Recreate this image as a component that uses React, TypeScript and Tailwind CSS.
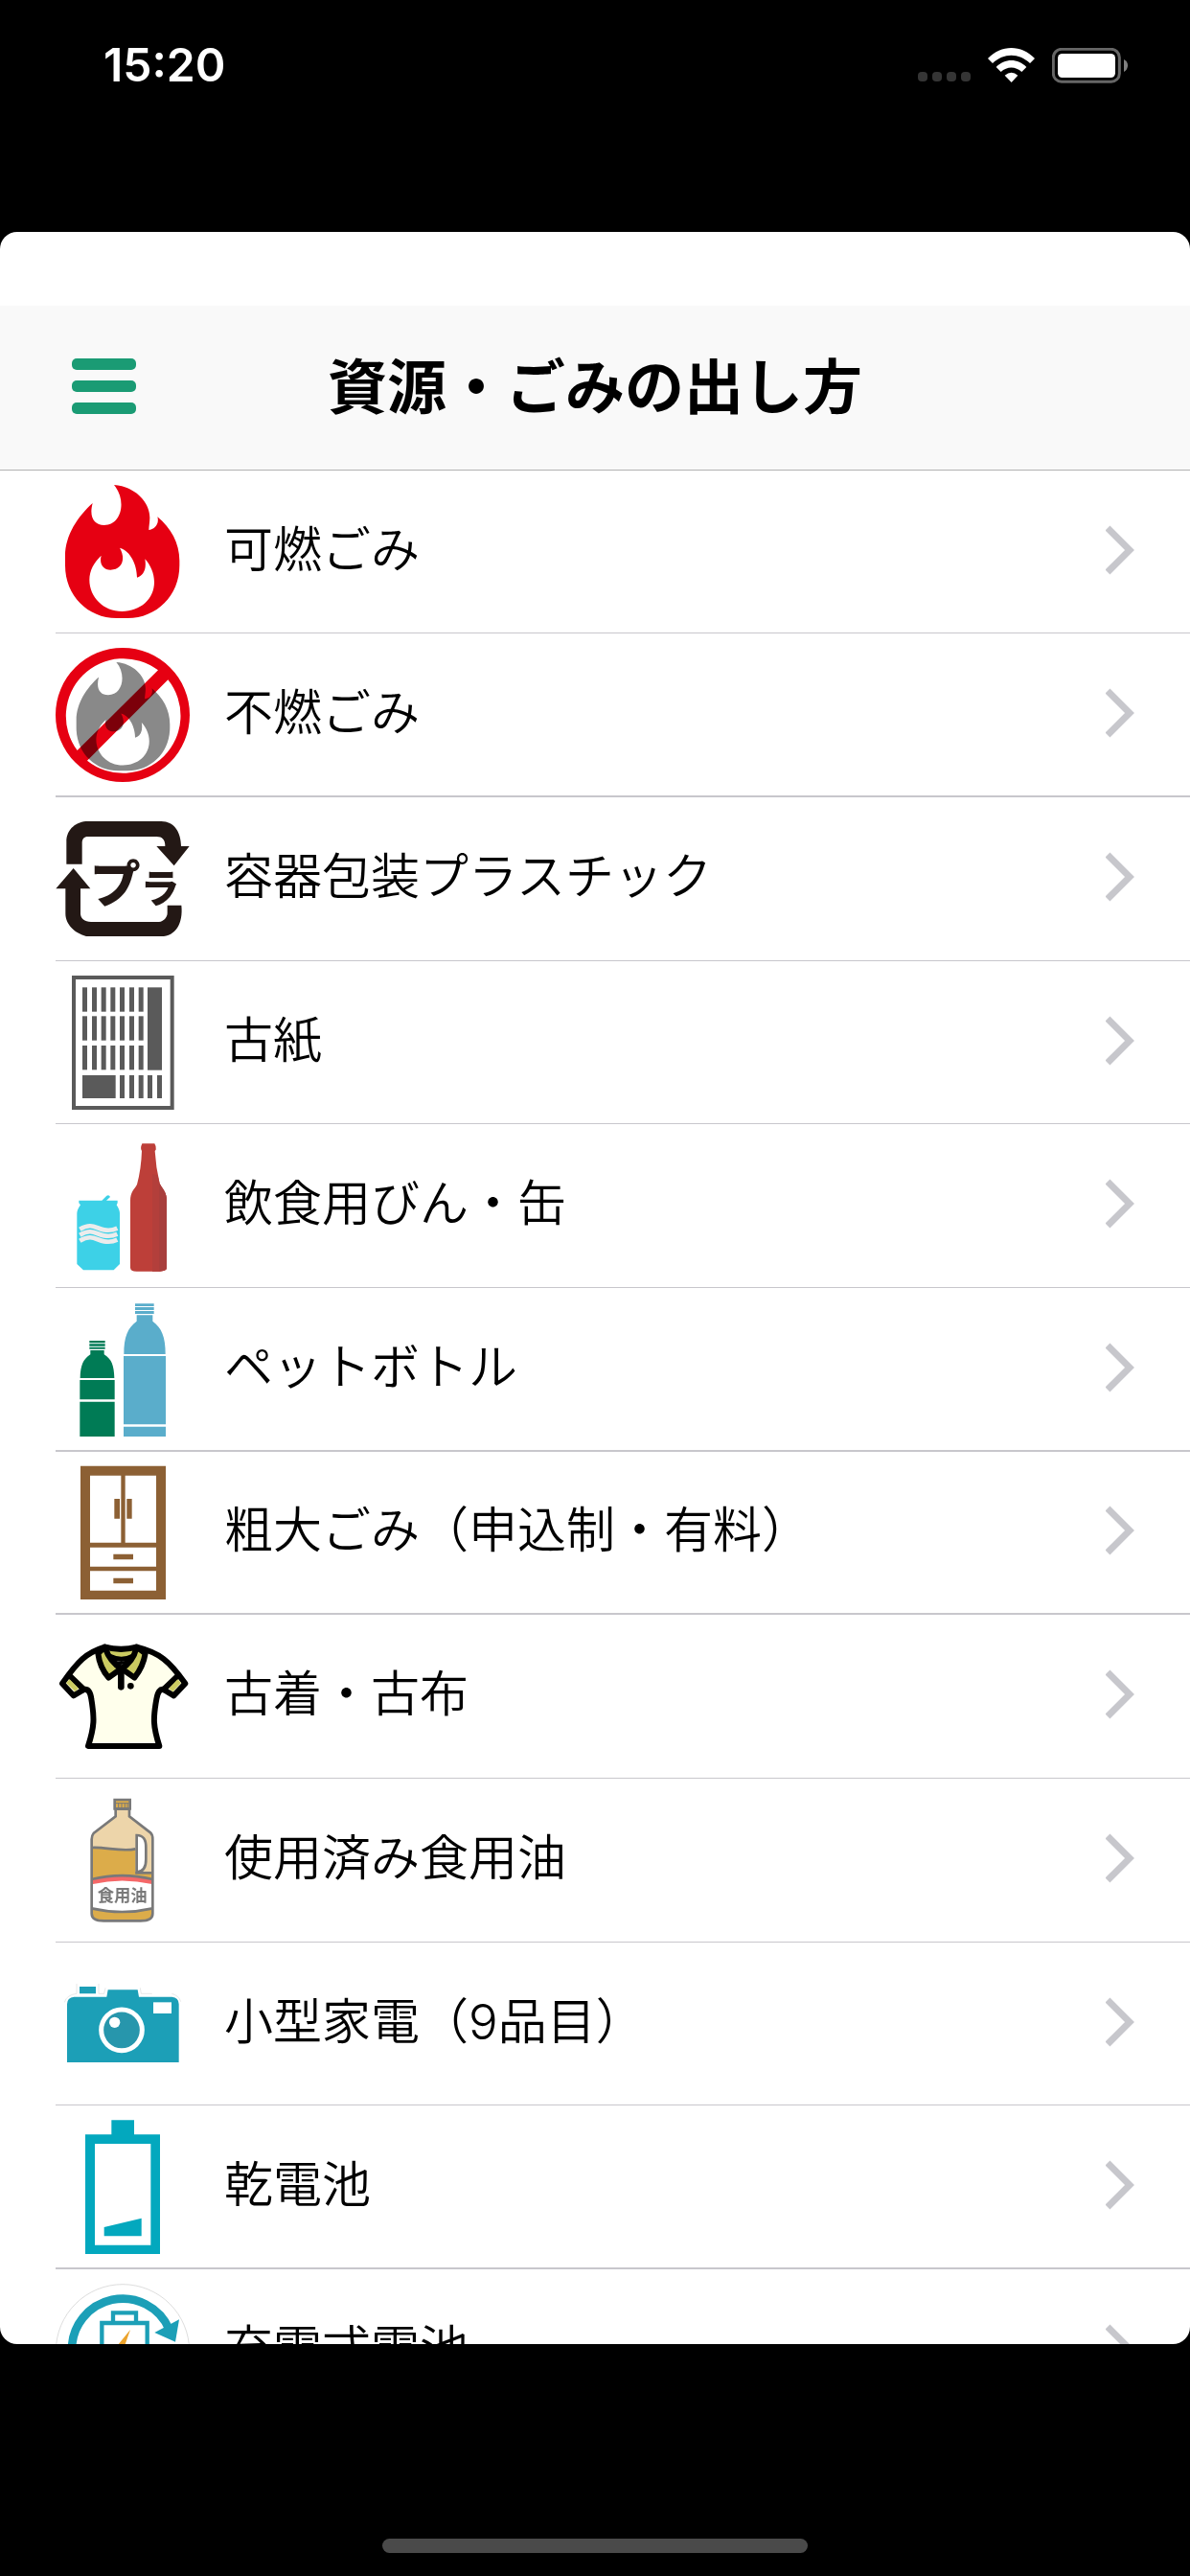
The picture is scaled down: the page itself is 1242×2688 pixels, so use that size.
import type { ReactNode } from 'react'

type Category = {
  label: string
  icon: ReactNode
  thick?: boolean
}

const FLAME_OUTER =
  'M237 48C300 52 349 100 349 150C349 165 346 178 346 189C362 188 380 172 373 148C415 183 442 230 442 285V300C442 395 370 465 280 465H245C155 465 84 395 84 300V270C84 205 125 145 170 105C158 150 175 174 206 174C262 174 277 95 237 48Z'
const FLAME_INNER =
  'M255 245C290 255 309 300 309 338C327 333 340 315 334 280C352 300 363 325 363 352C363 405 320 444 262 444C205 444 160 400 160 345C160 315 175 290 197 269C190 295 203 314 226 314C262 314 275 280 255 245Z'

function Icon({ viewBox, children }: { viewBox: string; children: ReactNode }) {
  return (
    <svg className="size-[140px] shrink-0" viewBox={viewBox} fill="none" aria-hidden="true">
      {children}
    </svg>
  )
}

function BurnableIcon() {
  return (
    <Icon viewBox="54 48 420 420">
      <path fill="#e60012" fillRule="evenodd" d={FLAME_OUTER + FLAME_INNER} />
    </Icon>
  )
}

function NonBurnableIcon() {
  return (
    <Icon viewBox="54 558 420 420">
      <path
        fill="#898989"
        fillRule="evenodd"
        transform="translate(50.3 563.9) scale(.818 .815)"
        d={FLAME_OUTER + FLAME_INNER}
      />
      <path
        className="mix-blend-multiply"
        fill="#e60012"
        fillRule="evenodd"
        d="M264 558A210 210 0 1 1 264 978A210 210 0 1 1 264 558ZM375 628A180 180 0 0 0 122 879ZM406 658L153 911A180 180 0 0 0 406 658Z"
      />
    </Icon>
  )
}

function PlasticIcon() {
  return (
    <Icon viewBox="54 51 420 420">
      <g fill="#231815">
        <path d="M88 215V145C88 105 120 81 155 81H385C425 81 447 115 447 159H473L425 220L370 159H397C397 138 388 129 370 129H155C143 129 137 137 137 148V215Z" />
        <path d="M110 228L163 292H132V370C132 385 145 396 165 396H378C392 394 404 382 404 368V344H448C454 400 430 441 385 441H150C115 432 85 405 85 370V292H55Z" />
        <text x="162" y="337" fontSize="158" fontWeight="900" fontFamily="Noto Sans CJK JP, sans-serif">
          プ<tspan fontSize="122">ラ</tspan>
        </text>
      </g>
    </Icon>
  )
}

function PaperIcon() {
  const columns = [138, 168, 197, 226, 255, 285, 314]
  return (
    <Icon viewBox="54 564 420 420">
      <rect x="111" y="570" width="308" height="408" stroke="#5a5a5a" strokeWidth="12" />
      <g fill="#5a5a5a">
        {[601, 691, 783].map((y) => columns.map((x) => <rect key={`${x}-${y}`} x={x} y={y} width="15" height="76" />))}
        {[255, 285, 314, 342, 372].map((x) => (
          <rect key={x} x={x} y="876" width="15" height="72" />
        ))}
        <rect x="342" y="601" width="45" height="259" />
        <rect x="138" y="876" width="104" height="72" />
      </g>
    </Icon>
  )
}

function BottleCanIcon() {
  return (
    <Icon viewBox="54 54 420 420">
      <path
        fill="#3dd1e7"
        d="M127 248H199L214 233Q222 229 225 237L213 248H248V256L245 262Q255 278 255 288V447L236 466H141L121 447V288Q121 278 132 262L127 256Z"
      />
      <g stroke="#ececec" strokeWidth="14">
        <path d="M130 338C168 316 180 336 206 340Q228 344 247 335" />
        <path d="M130 356C168 334 180 354 206 358Q228 362 247 353" />
        <path d="M130 374C168 352 180 372 206 376Q228 380 247 371" />
      </g>
      <path
        fill="#bd3f39"
        d="M325 70H364Q369 78 368 89L365 93Q368 145 380 195C390 215 402 220 402 250V460Q400 470 380 470H308Q288 470 288 458V250C288 220 300 215 309 198Q322 150 324 93Q318 85 325 70Z"
      />
      <path fill="#b33f3b" d="M357 165L374 170L380 195C390 215 402 220 402 250V460Q400 470 380 470H357Z" />
      <path fill="#a83f3d" d="M379 194C390 215 402 220 402 250V460Q400 468 379 469Z" />
    </Icon>
  )
}

function PetBottleIcon() {
  return (
    <Icon viewBox="54 567 420 420">
      <g fill="#5aadcb">
        <path d="M303 571H362V579H303ZM303 582H362V591H303ZM303 594H362V603H303Z" />
        <path d="M308 607H358V626C386 646 398 675 398 729H268C268 675 280 646 308 626Z" />
        <path d="M267 735H399V949H267ZM267 956H399V987H267Z" />
      </g>
      <g fill="#007b55">
        <path d="M160 687H209V694H160ZM160 697H209V704H160ZM160 707H209V713H160Z" />
        <path d="M163 717H206V730C230 745 237 765 238 804H131C132 765 140 745 163 730Z" />
        <path d="M130 810H239V871H130ZM130 878H239V987H130Z" />
      </g>
    </Icon>
  )
}

function WardrobeIcon() {
  return (
    <Icon viewBox="54 60 420 420">
      <path
        fill="#8c6034"
        fillRule="evenodd"
        d="M132 62H399V480H132ZM162 92V302H259V92ZM272 92V302H369V92ZM162 317V377H369V317ZM162 391V452H369V391Z"
      />
      <path fill="#8c6034" d="M238 165H255V227H238ZM277 165H293V227H277ZM235 338H297V355H235ZM235 413H297V430H235Z" />
    </Icon>
  )
}

function ShirtIcon() {
  return (
    <Icon viewBox="54 571 420 420">
      <g stroke="#000" strokeLinejoin="round" strokeLinecap="round">
        <path
          fill="#ffffec"
          strokeWidth="18"
          d="M208 627C150 645 125 670 75 741L110 779L143 760Q162 756 166 790C176 850 176 875 156 937H379C359 875 359 850 370 790Q376 756 392 760L424 779L460 741C410 670 380 645 308 627Q260 640 208 627Z"
        />
        <path strokeWidth="18" d="M99 718L143 760M436 718L392 760" />
        <path fill="#cbcb61" strokeWidth="16" d="M208 627Q260 643 308 627L300 655Q260 675 220 655Z" />
        <path fill="#cbcb61" strokeWidth="18" d="M208 627L187 647Q192 690 220 723L260 694Q225 675 208 627Z" />
        <path fill="#cbcb61" strokeWidth="18" d="M308 627L335 647Q328 690 301 723L260 694Q296 675 308 627Z" />
        <path strokeWidth="20" d="M259 697V752" />
        <path strokeWidth="9" d="M242 674Q260 682 278 672" />
      </g>
      <path fill="#cbcb61" d="M98 728L126 756L115 767L87 739ZM436 728L447 739L421 767L409 756Z" />
      <circle cx="289" cy="749" r="10" fill="#000" />
    </Icon>
  )
}

function OilIcon() {
  return (
    <Icon viewBox="54 63 420 420">
      <path
        fill="#edd5aa"
        d="M242 113H285V136L351 187Q358 193 358 208V440Q358 463 320 463H205Q167 463 167 440V208Q167 196 173 189L242 136Z"
      />
      <path fill="#dcac4a" d="M167 234C210 231 260 248 304 238V313H358V440Q358 463 320 463H205Q167 463 167 440Z" />
      <path fill="#fff" d="M167 342Q262 316 358 342V424Q262 446 167 424Z" />
      <path fill="#f56868" d="M171 335Q262 312 356 335V348Q262 327 171 348Z" />
      <g stroke="#797979" strokeWidth="8">
        <path d="M167 234C210 231 260 248 304 238M167 333Q262 310 358 333M167 424Q262 446 358 424" />
        <path fill="#fff" d="M308 195Q338 195 337 235V270Q338 308 308 311Z" />
        <path d="M304 313H358" />
        <path d="M242 113H285V136L351 187Q358 193 358 208V440Q358 463 320 463H205Q167 463 167 440V208Q167 196 173 189L242 136Z" />
        <path fill="#dcac4a" d="M239 84H287V112H239Z" />
        <path strokeWidth="3" d="M243 95H284M251 95V110M261 95V110M271 95V110M279 95V110" />
      </g>
      <text x="185" y="403" fontSize="52" fontWeight="700" fill="#797979" fontFamily="Noto Sans CJK JP, sans-serif">
        食用油
      </text>
    </Icon>
  )
}

function CameraIcon() {
  return (
    <Icon viewBox="54 576 420 420">
      <path fill="#1c9fb7" d="M129 669H180V691H129ZM112 701H214L218 679H311L315 701H418Q440 703 440 724V906H90V724Q90 703 112 701Z" />
      <path
        stroke="#ddd"
        strokeWidth="2"
        d="M82 718Q88 695 120 691V660M189 660V691H206L210 673M319 673L322 691H356M418 691Q440 697 446 716"
      />
      <path fill="#fff" d="M360 718H417V753H360Z" />
      <circle cx="261" cy="805" r="64" fill="#2796ac" stroke="#fff" strokeWidth="15" />
      <circle cx="239" cy="781" r="17" fill="#fff" />
    </Icon>
  )
}

function BatteryIcon() {
  return (
    <Icon viewBox="54 68 420 420">
      <path fill="#03a8be" fillRule="evenodd" d="M229 69H300V114H381V489H147V114H229ZM177 143V460H352V143Z" />
      <path fill="#03a8be" d="M206 404L323 376V432H206Z" />
    </Icon>
  )
}

function RechargeableIcon() {
  return (
    <Icon viewBox="54 581 420 420">
      <circle cx="264" cy="792" r="209" stroke="#ccc" strokeWidth="2" />
      <path stroke="#1c9fb7" strokeWidth="26" d="M138 880A159 159 0 0 1 105 790A159 159 0 0 1 410 724M390 880A159 159 0 0 1 160 912" />
      <path fill="#1c9fb7" d="M364 734L441 693L429 763Z" />
      <path stroke="#1c9fb7" strokeWidth="13" d="M199 704H341V910H199ZM234 704V672H306V704" />
      <path fill="#eca32c" d="M288 725L222 806H262L240 870L310 782H268Z" />
    </Icon>
  )
}

const categories: Category[] = [
  { label: '可燃ごみ', icon: <BurnableIcon /> },
  { label: '不燃ごみ', icon: <NonBurnableIcon />, thick: true },
  { label: '容器包装プラスチック', icon: <PlasticIcon /> },
  { label: '古紙', icon: <PaperIcon /> },
  { label: '飲食用びん・缶', icon: <BottleCanIcon /> },
  { label: 'ペットボトル', icon: <PetBottleIcon />, thick: true },
  { label: '粗大ごみ（申込制・有料）', icon: <WardrobeIcon />, thick: true },
  { label: '古着・古布', icon: <ShirtIcon /> },
  { label: '使用済み食用油', icon: <OilIcon /> },
  { label: '小型家電（9品目）', icon: <CameraIcon /> },
  { label: '乾電池', icon: <BatteryIcon />, thick: true },
  { label: '充電式電池', icon: <RechargeableIcon /> },
]

function StatusBar() {
  return (
    <div className="flex h-[242px] shrink-0 items-start justify-between pt-10 pr-[65px] pl-[108px] text-white">
      <time className="font-['Inter',sans-serif] text-[48px] leading-[56px] font-semibold">15:20</time>
      <div className="flex h-14 items-center gap-[18px]">
        <div className="flex gap-[5px] pt-6">
          {[0, 1, 2, 3].map((dot) => (
            <span key={dot} className="size-[10px] rounded-[4px] bg-[#353535]" />
          ))}
        </div>
        <svg className="h-9 w-[49px]" viewBox="303 57 147 108" fill="currentColor" aria-label="Wi-Fi">
          <path d="M303 90C345 46 408 46 450 90L435 105C400 72 353 72 318 105Z" />
          <path d="M329 117C356 89 397 89 424 117L409 132C390 114 363 114 344 132Z" />
          <path d="M356 143Q377 125 397 143L377 165Z" />
        </svg>
        <svg className="h-[37px] w-[79px]" viewBox="504 57 237 111" aria-label="Battery">
          <rect x="508" y="61" width="207" height="102" rx="26" fill="none" stroke="#666" strokeWidth="9" />
          <rect x="522" y="75" width="180" height="75" rx="14" fill="#fff" />
          <path fill="#808080" d="M729 93Q741 99 741 112Q741 126 729 132Z" />
        </svg>
      </div>
    </div>
  )
}

function CategoryRow({ label, icon, thick }: Category) {
  return (
    <li className="h-[171px] shrink-0 pl-[58px] nth-[3n+1]:h-[170px]">
      <a
        href="#"
        className={`flex h-full items-center gap-9 border-[#c8c7cc] pr-[58px] ${thick ? 'border-b-2' : 'border-b'}`}
      >
        {icon}
        <span className="flex flex-1 items-center justify-between pb-1">
          <span className="text-[51px] leading-[60px] font-[350]">{label}</span>
          <svg className="h-[52px] w-[30px]" viewBox="0 0 30 52" fill="none" aria-hidden="true">
            <path d="M2 3L25 26L2 49" stroke="#c7c7cc" strokeWidth="7" />
          </svg>
        </span>
      </a>
    </li>
  )
}

export default function App() {
  return (
    <div className="flex h-screen flex-col bg-black font-['Inter','Noto_Sans_CJK_JP',sans-serif] text-black">
      <StatusBar />

      <main className="flex min-h-0 flex-1 flex-col overflow-hidden rounded-[18px] bg-white pt-[77px]">
        <header className="grid h-[172px] shrink-0 grid-cols-[1fr_auto_1fr] items-center border-b border-[#b2b2b2] bg-[#f9f9f9] px-[75px]">
          <button type="button" aria-label="メニュー" className="flex w-[67px] flex-col gap-[11px] pb-1">
            <span className="h-3 w-full rounded-[5px] bg-[#1a9b74]" />
            <span className="h-3 w-full rounded-[5px] bg-[#1a9b74]" />
            <span className="h-3 w-full rounded-[5px] bg-[#1a9b74]" />
          </button>
          <h1 className="text-[62px] leading-[72px] font-bold">資源・ごみの出し方</h1>
        </header>

        <ul className="flex min-h-0 flex-1 flex-col overflow-y-auto [scrollbar-width:none]">
          {categories.map((category) => (
            <CategoryRow key={category.label} {...category} />
          ))}
        </ul>
      </main>

      <footer className="flex h-[242px] shrink-0 items-end justify-center pb-6">
        <div className="h-[15px] w-[444px] rounded-full bg-[#4a4a4a]" />
      </footer>
    </div>
  )
}
